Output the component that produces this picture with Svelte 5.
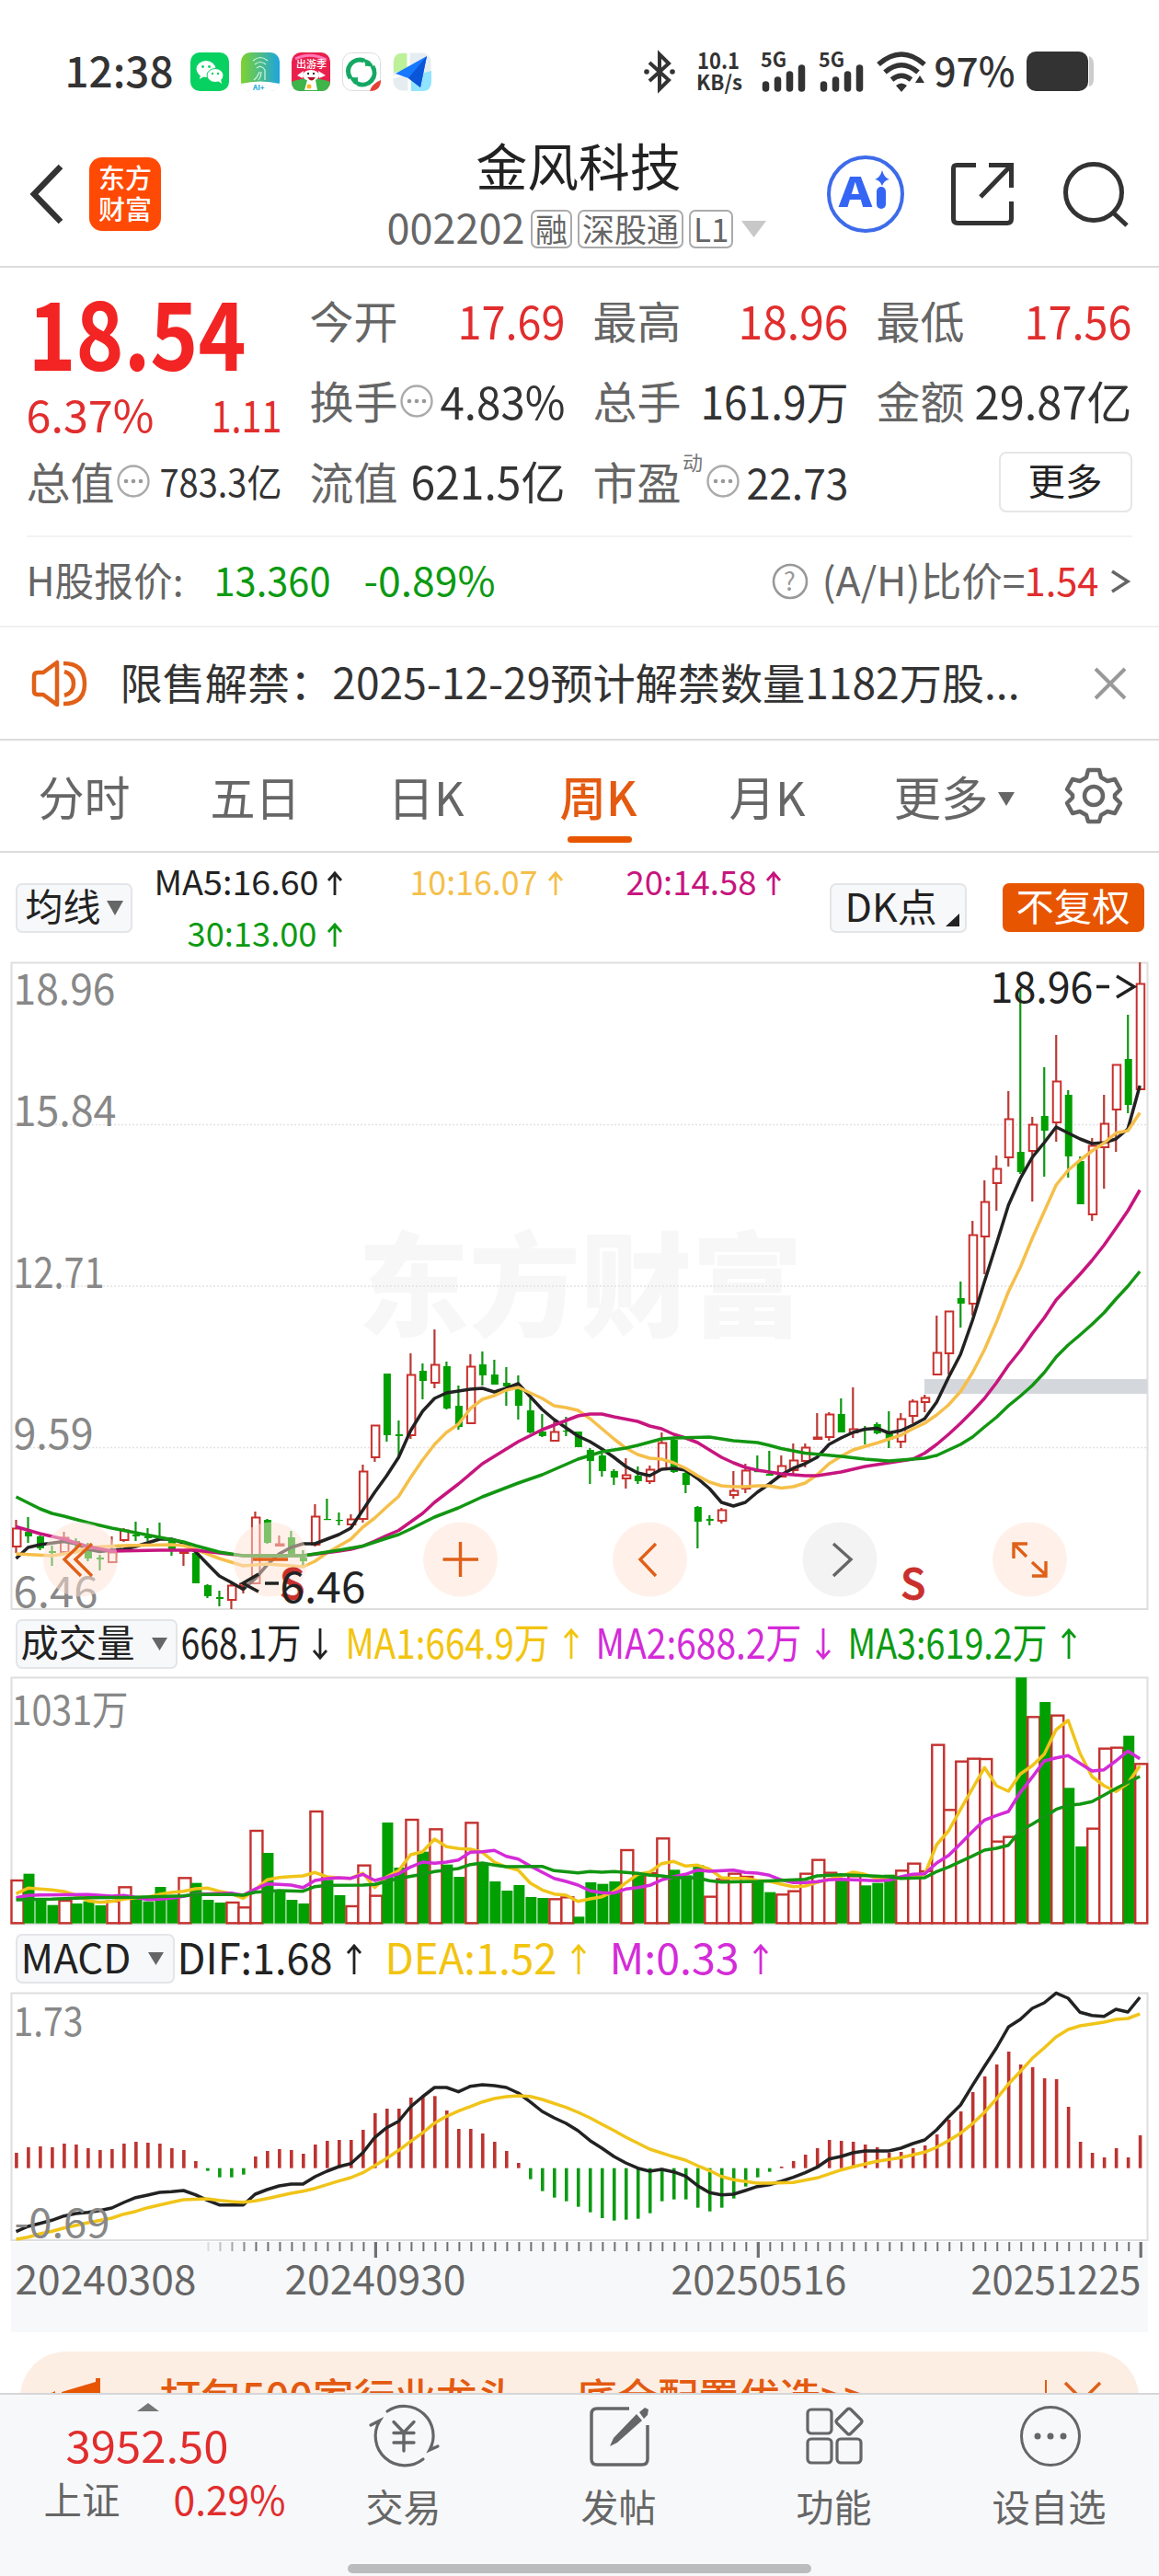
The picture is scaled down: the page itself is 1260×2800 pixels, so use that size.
<script>
  const STEP = 12.997;
  const X0 = 17.5;
  const cx = (i) => X0 + i * STEP;

  // Weekly candles: [direction, high, body top, body bottom, low] on the price plot
  const candles = [
    ['r',606,615,635,642],['g',603,619,624,631],['g',623,624,637,639],['g',634,640,642,656],['r',619,625,641,641],
    ['g',626,629,632,636],['g',631,639,648,651],['g',644,647,649,661],['r',624,641,652,652],['r',615,617,628,630],
    ['g',608,622,624,629],['g',615,624,626,629],['g',609,626,627,628],['g',628,628,638,645],['r',639,640,642,656],
    ['g',642,642,675,675],['g',676,677,689,691],['g',683,690,692,700],['r',675,677,693,703],['r',674,675,678,686],
    ['r',597,603,675,675],['g',605,606,631,632],['r',623,632,634,635],['g',618,625,643,644],['g',639,647,651,656],
    ['r',589,602,633,635],['g',583,605,606,606],['g',598,606,607,612],['r',600,605,611,611],['r',546,553,605,609],
    ['r',503,503,538,543],['g',447,447,514,521],['g',498,513,515,537],['r',425,448,514,518],['g',436,444,455,475],
    ['r',399,437,457,463],['g',434,439,485,486],['g',460,482,505,508],['r',426,439,501,501],['g',423,437,449,460],
    ['g',432,448,459,459],['g',440,457,461,482],['g',449,464,482,497],['g',474,487,511,512],['g',491,510,515,516],
    ['r',499,510,520,520],['g',494,509,510,515],['g',510,510,527,527],['g',528,530,542,567],['g',534,536,553,559],
    ['g',551,553,560,568],['r',539,557,561,572],['g',548,558,564,567],['r',547,551,564,567],['r',511,522,551,551],
    ['g',518,519,554,555],['g',549,555,568,577],['g',591,592,608,637],['g',601,605,607,612],['r',593,595,607,610],
    ['r',553,574,579,583],['r',545,552,572,577],['g',536,553,554,554],['g',531,556,558,558],['r',536,547,559,560],
    ['r',523,541,552,556],['r',523,527,542,549],['r',490,516,518,518],['r',489,491,516,520],['g',474,491,511,511],
    ['r',462,507,511,517],['g',504,507,509,524],['g',500,502,512,513],['g',488,512,519,528],['r',490,496,521,528],
    ['r',475,477,493,501],['r',470,473,478,489],['r',384,424,448,448],['r',379,379,425,448],['g',347,365,371,397],
    ['r',281,296,371,384],['r',237,260,298,339],['r',210,224,240,270],['r',140,170,212,222],['g',28,206,228,230],
    ['r',168,176,205,260],['g',114,167,183,233],['r',79,129,174,195],['g',139,144,211,234],['g',211,216,263,263],
    ['r',191,199,274,281],['r',144,175,201,246],['r',111,111,160,206],['g',57,105,155,164],['r',0,23,138,138]
  ];

  // Line series as "index:value" pairs
  const parse = (s) => s.split(' ').map((p) => p.split(':').map(Number));
  const line = (s, f = (v) => v) => parse(s).map(([i, v]) => `${cx(i).toFixed(1)},${f(v).toFixed(1)}`).join(' ');

  const ma5 = line('0:648 1:636 2:633 4:629.5 5:632 6:638 7:640.5 8:639 9:638 10:635 11:631 12:627 13:627 14:631 15:640.5 16:654 17:667 18:674 19:681.5 20:670 21:655 22:643 23:636 24:632 25:632 26:627 27:622 28:615 29:595.5 30:576 31:558 32:538 33:509 34:488 35:474 36:468 37:466 38:464 39:463 40:467 41:463 42:458 43:472 44:486 45:497 46:506 47:515 48:521 49:529 50:538 51:548 52:555 53:558 54:551 55:550 56:552 57:561 58:572 59:587 60:591 61:587 62:576 63:567 64:557 65:550 66:545 67:538 68:524 69:517 70:511 71:507.5 72:506.5 73:511.5 74:509 75:503 76:496 77:478 78:451 79:426 80:389 81:347 82:306 83:264 84:235 85:212 86:196 87:179 88:185.5 89:192 90:197 91:196 92:192 93:181 94:134');
  const ma10 = line('0:643 3:645 5:641 6:636 9:634 13:633 14:634 15:638 17:648 19:656 21:654 24:657 25:651 26:642 28:627 29:614 30:604 31:592 32:580.5 33:560 34:541 35:524 36:511 37:502 38:485 39:475 40:471 41:465 42:462 43:468 44:474 45:482 46:484 47:487 48:496 49:507 50:518 51:528 52:535 53:539 54:540 55:544 56:550 57:558 58:565 59:569 60:570 61:570 62:569 63:569 64:571.5 65:570 66:566 67:557 68:545 69:537 70:530 72:522.5 74:514 75:507 76:501 77:492 78:481 79:466.5 80:446 81:421 82:391 83:358 84:331.5 85:300 86:271 87:242 88:226 89:215 90:205 91:196.5 92:185.5 93:183 94:163.5');
  const ma20 = line('0:613.5 2:621 4:627 6:635 8:640 12:639 15:639 17:642 19:645 24:645 27:640 28:638 29:634.5 30:629 31:623 32:617.5 34:599 35:587 37:567 39:545 40:537 42:521 44:508 46:498 47:493 48:491 49:491 50:494 52:499 53:504 54:507 55:513 56:517 57:522 58:530 59:538 60:544 61:549 62:552 64:556 66:558 67:558 69:554 71:548 73:544 75:540 76:533.5 77:524 78:513 79:501 80:488 81:474 82:457 83:438 84:422 85:403.5 86:386.5 87:367 89:339 90:324 91:307.5 92:289 93:270 94:247.5');
  const ma30 = line('0:581 2:594 3:599 4:602 6:609 8:615 10:620 12:625 14:630 15:634 17:641 19:645 24:645 27:639 29:634.5 31:626 32:622 33:616 35:603 37:593 39:581 42:566 44:557 47:540 49:532 51:528 52:525 54:518 55:517 58:516 60:520 62:522 63:525 64:528.5 66:533.5 69:537 71:540 73:542 76:539 77:536 79:524 80:516 81:505 82:494.5 83:482 84:471.5 85:460 86:446 87:429 88:416 89:405 90:393.5 91:381 92:366 93:352 94:336');

  // Volume bars; minus marks a down week
  const vy = (v) => (v - 219) / 3;
  const volume = [882,-860,-945,-962,948,-957,-950,-963,950,904,-942,-950,-903,-942,874,-890,-945,-954,954,970,720,-792,-920,-945,-957,657,-880,-930,966,833,932,-693,-840,684,-788,715,-830,-870,694,-825,-885,-915,-897,-936,-939,943,937,-1000,-888,-893,-885,783,-862,858,745,-847,-865,-832,935,878,860,870,-885,-920,928,917,860,815,857,-882,868,-898,-890,-863,850,827,852,440,652,494,485,486,755,740,-220,349,-300,344,-580,-771,713,452,449,-410,502];
  const v1 = line('0:925 1:907 2:910 3:913 4:918 5:930 6:948 7:953 8:950 9:943 10:938 11:937 12:927 13:921 14:917 15:909 16:907 17:917 18:925 19:940 20:912 21:880 22:872 23:869 24:867 25:856 26:870 27:874 28:875 29:858 30:905 31:870 32:850 33:798 34:788 35:747 36:772 37:778 38:780 39:790 40:822 41:838 42:848 43:890 44:913 45:926 46:930 47:950 48:942 49:935 50:918 51:890 52:862 53:855 54:827 55:820 56:835 57:832 58:845 59:873 60:875 61:875 62:882 63:884 64:894 65:902 66:900 67:888 68:878 69:868 70:855 71:862 72:875 73:878 74:873 75:870 76:862 77:765 78:720 79:650 80:582 81:514 82:573 83:591 84:535 85:508 86:470 87:390 88:360 89:468 90:543 91:573 92:592 93:565 94:508', vy);
  const v2 = line('0:938 1:931 2:929 6:928 8:933 9:931 10:937 11:944 12:943 13:940 15:927 18:923 19:930 20:910 21:893 22:895 23:897 24:905 25:882 26:876 27:873 28:875 29:862 30:882 31:872 32:860 33:838 34:822 35:826 36:822 37:815 38:790 39:788 40:784 41:803 42:812 43:835 44:855 45:875 46:885 47:897 48:916 49:922 50:923 51:910 52:905 53:898 54:880 55:870 56:862 57:848 58:852 60:848 61:856 62:858 63:865 64:880 65:889 66:889 67:886 68:880 69:878 71:881 72:883 73:881 74:870 75:862 76:860 77:825 78:800 79:762 80:722 81:685 82:670 83:657 84:595 85:545 86:492 87:482 88:475 89:500 90:525 91:521 92:492 93:460 94:485', vy);
  const v3 = line('0:945 3:943 6:938 10:937 14:932 15:928 18:928 19:930 20:920 22:915 24:917 25:902 26:898 29:897 30:895 31:885 32:875 34:862 35:853 36:848 37:843 38:830 39:825 40:832 41:837 44:836 45:850 47:857 48:853 49:855 50:853 52:859 53:865 54:867 55:872 57:874 58:883 59:887 62:885 66:878 67:867 69:863 72:868 73:870 74:875 76:873 77:853 78:838 79:820 80:802 81:783 82:777 83:767 84:720 85:698 86:675 87:650 88:637 89:633 90:625 91:604 92:582 93:562 94:543', vy);

  const my = (v) => (v - 198) / 3;
  const ZERO = 770;
  const hist = [720,702,699,702,690,693,705,711,708,690,684,687,690,705,711,747,779,800,800,791,732,714,708,711,723,693,681,678,678,645,591,576,576,540,535,535,582,642,642,657,684,714,753,806,845,866,878,896,914,933,941,938,935,917,878,872,872,899,911,899,869,830,800,782,765,747,726,705,678,681,684,693,702,720,717,705,696,660,612,585,522,471,432,390,432,441,477,480,570,684,720,735,705,735,663];
  const dif = line('0:977 1:960 2:950 3:940 4:926 5:918 6:914 7:908 8:900 9:882 10:866 11:858 12:849 13:847 14:843 15:857 16:875 17:890 19:890 20:855 21:840 22:828 23:822 24:822 25:798 26:780 27:765 28:755 29:720 30:670 31:638 32:617 33:570 34:537 35:507 36:507 37:521 38:503 39:498 40:501 41:507 42:525 43:554 44:585 45:606 46:624 47:648 48:680 49:705 50:732 51:753 52:770 53:780 54:774 55:782 56:796 57:827 58:850 59:857 60:855 61:843 62:830 63:824 64:813 65:800 66:785 67:767 68:740 69:732 70:720 71:714 73:714 74:705 75:690 76:678 77:645 78:603 79:564 80:500 81:438 82:378 83:310 84:285 85:249 86:231 87:199 88:216 89:262 90:272 91:275 92:252 93:261 94:213', my);
  const dea = line('0:1002 1:995 2:984 3:976 4:965 6:948 8:933 9:920 10:911 11:899 13:881 14:873 16:870 17:875 18:879 19:881 20:877 21:869 23:852 24:845 25:836 26:824 27:812 28:801 29:785 30:762 31:738 32:712 33:683 34:655 35:623 36:601 37:584 39:554 40:543 41:537 42:534 43:536 44:546 46:572 47:588 48:606 49:627 50:647 51:669 53:708 55:733 56:744 57:762 58:778 59:797 60:808 62:819 63:819 65:817 67:802 69:776 70:766 71:757 72:748 74:736 76:718 77:702 78:680 79:656 80:625 81:588 82:544 83:496 84:455 85:412 86:378 87:342 88:318 89:306 91:294 92:285 93:282 94:267', my);

  const ticks = Array.from({ length: 79 }, (_, k) => k + 16);
  const grid = [['18.96', 45.5, 108], ['15.84', 178, 109], ['12.71', 353.5, 96], ['9.59', 529, 84], ['6.46', 701, 89]];
  const tabs = [['分时', 99], ['五日', 97], ['日K', 82], ['周K', 83], ['月K', 82], ['更多', 102]];
</script>

{#snippet fit(t, w, s, cls = '')}
  <svg class="fit {cls}" width={w} height={s}><text x="-1.500" y={s * 0.86} font-size={s} textLength={w + 1} lengthAdjust="spacingAndGlyphs">{t}</text></svg>
{/snippet}

{#snippet label(t, x, y, w, s, cls)}
  <text class={cls} x={x - 1.5} {y} font-size={s} textLength={w} lengthAdjust="spacingAndGlyphs">{t}</text>
{/snippet}

{#snippet arrow(x, top, h, up, cls)}
  <path class="arrow {cls}" d={up ? `M${x} ${top + h}V${top + 1}m-7 9l7-8l7 8` : `M${x} ${top}v${h - 1}m-7-8l7 8l7-8`} />
{/snippet}

{#snippet dots()}
  <svg class="dots" width="36" height="36"><circle cx="18" cy="18" r="16.5" fill="none" stroke="#aaa" stroke-width="2.4" /><circle cx="10" cy="18" r="2.3" /><circle cx="18" cy="18" r="2.3" /><circle cx="26" cy="18" r="2.3" /></svg>
{/snippet}

<div class="page">
  <div class="status">
    {@render fit('12:38', 117, 46, 'dark med')}
    <div class="apps">
      <svg width="42" height="42" viewBox="0 0 42 42"><rect width="42" height="42" rx="10" fill="#07d160" /><ellipse cx="17" cy="18" rx="10.5" ry="9" fill="#fff" /><path d="M11 24l-1 5 5-3z" fill="#fff" /><ellipse cx="27" cy="25" rx="9" ry="7.5" fill="#fff" stroke="#07d160" /><path d="M30 31l4 3-1-5z" fill="#fff" /><g fill="#07d160"><circle cx="13.500" cy="15.500" r="1.400" /><circle cx="20.500" cy="15.500" r="1.400" /><circle cx="24" cy="23" r="1.200" /><circle cx="30" cy="23" r="1.200" /></g></svg>
      <svg width="42" height="42" viewBox="0 0 42 42"><defs><linearGradient id="ag" x1="0" x2="1"><stop offset="0" stop-color="#7fd22e" /><stop offset="1" stop-color="#1ca5e0" /></linearGradient></defs><rect width="42" height="42" rx="10" fill="url(#ag)" /><g fill="none" stroke="#c9f7e2" stroke-width="1.200"><path d="M13 9q8-7 16 0M15 13q6-5 12 0M17 17q5-4 9 2v11M14 30q4-3 6-9M19 30q3-4 3-9" /></g><path d="M0 34Q21 29 42 34Q40 42 32 42H10Q2 42 0 34" fill="#fff" /><text x="13" y="41" font-size="8" font-weight="700" fill="#16a5d8">AI+</text></svg>
      <svg width="42" height="42" viewBox="0 0 42 42"><rect width="42" height="42" rx="10" fill="#e91f4c" /><path d="M4 7Q20-1 38 8" stroke="#ff78b8" stroke-width="3" fill="none" /><path d="M0 32q20-8 42 0q-1 10-10 10H10Q0 42 0 32" fill="#3eb449" /><text x="5" y="17" font-size="11" font-weight="500" fill="#fff">出游季</text><ellipse cx="21" cy="25" rx="9" ry="6" fill="#fff" /><path d="M13 20l-7 5 6 3zM29 20l8 5-7 3z" fill="#fff" /><path d="M17 30h9l2 11H14z" fill="#fff" /><circle cx="18" cy="23" r="1.200" /><circle cx="24" cy="23" r="1.200" /><path d="M17 27h9q-4 7-9 0" fill="#b31326" /><circle cx="19" cy="37" r="2.500" fill="#ffb424" /></svg>
      <svg width="42" height="42" viewBox="0 0 42 42"><rect x=".5" y=".5" width="41" height="41" rx="10" fill="#fff" stroke="#ddd" /><path d="M24 9A12.500 12.500 0 0 0 9 28M17 34A13 13 0 0 0 33 15" fill="none" stroke="#15a863" stroke-width="5" /><path d="M20 7Q32 6 34 17Q29 14 25 15Q26 10 20 7M22 36Q11 37 8 26Q13 28 17 27Q16 33 22 36" fill="#15a863" /><path d="M30 42q2-8 12-12q0 12-12 12" fill="#e54236" /></svg>
      <svg width="42" height="42" viewBox="0 0 42 42"><rect x=".5" y=".5" width="41" height="41" rx="10" fill="#e6edf0" /><path d="M1 22V10Q1 1 10 1H17V18z" fill="#bdf199" /><path d="M20 42V26L42 20V32Q42 42 32 42z" fill="#91e4ff" /><path d="M17 0V22L0 27M18 28V42" stroke="#fff" stroke-width="3" fill="none" /><path d="M37 4L3 23L17 28L30 38Z" fill="#1677ff" /><path d="M37 4L17 28L30 38Z" fill="#0b55d8" /></svg>
    </div>
    <div class="signals">
      <svg width="36" height="44" viewBox="0 0 36 44"><path d="M7 12L28 31L18 41V3L28 13L7 32" fill="none" stroke="#333" stroke-width="4" /><circle cx="4" cy="22" r="2.800" /><circle cx="32" cy="22" r="2.800" /></svg>
      <svg class="rate" width="52" height="46"><text x="1" y="20" font-size="25" textLength="46" lengthAdjust="spacingAndGlyphs">10.1</text><text x="0" y="43" font-size="22" textLength="50" lengthAdjust="spacingAndGlyphs">KB/s</text></svg>
      {#each [0, 1] as n}
        <svg class="cell c{n}" width="52" height="44"><text x="0" y="17" font-size="22" textLength="28" lengthAdjust="spacingAndGlyphs">5G</text><g stroke="#333" stroke-width="7.500" stroke-linecap="round"><path d="M5.500 36V40M18.500 31V40M31.500 25V40M44.500 18V40" /></g></svg>
      {/each}
      <svg class="wifi" width="54" height="44" viewBox="0 0 54 44"><g fill="none" stroke="#333" stroke-width="5.500"><path d="M2 14Q27-8 52 14M9 22.500Q27 7 45 22.500M16.500 30.500Q27 22 37.500 30.500" /></g><path d="M21 37q6-5 12 0l-6 7zM42 34l5-8 5 8z" /></svg>
      {@render fit('97%', 87, 43, 'dark med')}
      <svg class="bat" width="74" height="44"><rect width="67" height="43" rx="10" /><path d="M68 5Q73 7 73 14V30Q73 37 68 38" fill="#ccc" /></svg>
    </div>
  </div>

  <header>
    <svg class="back" width="40" height="68" viewBox="0 0 40 68"><path d="M35 4L6 34L35 64" fill="none" stroke="#333" stroke-width="6.500" /></svg>
    <div class="logo"><span>东方</span><span>财富</span></div>
    <div class="title">
      {@render fit('金风科技', 222, 55, 'ink')}
      <div class="sub">
        {@render fit('002202', 149, 45, 'grey')}
        <span class="tag">融</span><span class="tag">深股通</span><span class="tag">L1</span>
        <svg class="drop" width="27" height="18"><path d="M0 0H27L13.500 18Z" fill="#c8c8c8" /></svg>
      </div>
    </div>
    <svg class="ai" width="86" height="86"><circle cx="43" cy="43" r="40" fill="none" stroke="#3d6bea" stroke-width="4" /><text x="14" y="57" font-size="44" font-weight="900" fill="#3565f5" textLength="36" lengthAdjust="spacingAndGlyphs">A</text><path d="M60 40V54" stroke="#3565f5" stroke-width="10" stroke-linecap="round" /><path d="M61 17Q63 25 69 27Q63 28 61 34Q59 28 53 27Q59 25 61 17" fill="#3565f5" /></svg>
    <svg class="share" width="70" height="70" viewBox="0 0 70 70"><path d="M28 3.500H7Q3.500 3.500 3.500 7V62Q3.500 66.500 8 66.500H62Q66.500 66.500 66.500 62V43M42 3.500H66.500V28M66 4L33 38" fill="none" stroke="#333" stroke-width="5" /></svg>
    <svg class="search" width="72" height="72" viewBox="0 0 72 72"><circle cx="33" cy="34" r="30.500" fill="none" stroke="#333" stroke-width="5" /><path d="M54 56L69 70" stroke="#333" stroke-width="5" /></svg>
  </header>

  <section class="quote">
    <div class="col lead">
      <div class="price">{@render fit('18.54', 236, 103, 'hot bold')}</div>
      <div class="chg">{@render fit('6.37%', 138, 48, 'red')}{@render fit('1.11', 76, 48, 'red')}</div>
      <div class="cell-row">{@render fit('总值', 95, 48, 'grey')}{@render dots()}<i></i>{@render fit('783.3亿', 132, 41, 'dark')}</div>
    </div>
    <div class="col">
      <div class="cell-row">{@render fit('今开', 95, 48, 'grey')}<i></i>{@render fit('17.69', 116, 50, 'red')}</div>
      <div class="cell-row">{@render fit('换手', 95, 48, 'grey')}{@render dots()}<i></i>{@render fit('4.83%', 135, 49, 'dark')}</div>
      <div class="cell-row">{@render fit('流值', 95, 48, 'grey')}<i></i>{@render fit('621.5亿', 167, 49, 'dark')}</div>
    </div>
    <div class="col">
      <div class="cell-row">{@render fit('最高', 95, 48, 'grey')}<i></i>{@render fit('18.96', 119, 50, 'red')}</div>
      <div class="cell-row">{@render fit('总手', 95, 48, 'grey')}<i></i>{@render fit('161.9万', 160, 49, 'dark')}</div>
      <div class="cell-row">{@render fit('市盈', 95, 48, 'grey')}<sup>动</sup>{@render dots()}<i></i>{@render fit('22.73', 110, 46, 'dark')}</div>
    </div>
    <div class="col">
      <div class="cell-row">{@render fit('最低', 95, 48, 'grey')}<i></i>{@render fit('17.56', 116, 50, 'red')}</div>
      <div class="cell-row">{@render fit('金额', 95, 48, 'grey')}<i></i>{@render fit('29.87亿', 170, 49, 'dark')}</div>
      <div class="cell-row"><i></i><div class="more">{@render fit('更多', 80, 40, 'ink')}</div></div>
    </div>
  </section>

  <section class="hshare">
    {@render fit('H股报价:', 170, 43, 'grey')}
    <span class="h1">{@render fit('13.360', 126, 44, 'green')}</span>
    <span class="h2">{@render fit('-0.89%', 142, 44, 'green')}</span>
    <i></i>
    <svg class="help" width="40" height="40"><circle cx="20" cy="20" r="18" fill="none" stroke="#999" stroke-width="2.600" /><text x="13" y="30" font-size="27" fill="#999">?</text></svg>
    {@render fit('(A/H)比价=', 220, 43, 'grey')}{@render fit('1.54', 80, 44, 'red')}
    <svg class="gt" width="21" height="28"><path d="M2 3L19 14L2 25" fill="none" stroke="#666" stroke-width="3.500" /></svg>
  </section>

  <section class="notice">
    <svg width="62" height="54" viewBox="0 0 62 54"><g fill="none" stroke="#e06018" stroke-width="4.500" stroke-linejoin="round"><path d="M3 19Q3 15 7 15H13L28 4V50L13 39H7Q3 39 3 35ZM36 14Q46 17 46 27Q46 37 36 40M35 5Q58 5 58 27Q58 49 35 49" /></g></svg>
    {@render fit('限售解禁：2025-12-29预计解禁数量1182万股...', 977, 46, 'dark')}
    <svg class="close" width="36" height="36"><path d="M2 2L34 34M34 2L2 34" stroke="#999" stroke-width="4" /></svg>
  </section>

  <nav class="tabs">
    {#each tabs as [t, w], k}
      <div class="tab" class:on={k === 3} class:wide={k === 5}>{@render fit(t, w, 51, k === 3 ? 'orange med' : 'grey')}{#if k === 5}<svg width="18" height="15"><path d="M0 0H18L9 15Z" fill="#666" /></svg>{/if}</div>
    {/each}
    <svg class="gear" width="62" height="62" viewBox="0 0 62 62"><g fill="none" stroke="#666" stroke-width="4.500" stroke-linejoin="round"><path d="M25 3H37L39 11L46 15L54 13L60 24L54 30V33L60 39L54 50L46 48L39 52L37 59H25L23 52L16 48L8 50L2 39L8 33V30L2 24L8 13L16 15L23 11Z" /><circle cx="31" cy="31" r="10" /></g></svg>
  </nav>

  <section class="marow">
    <div class="chip avg">{@render fit('均线', 81, 41, 'ink')}<svg width="18" height="16"><path d="M0 0H18L9 16Z" fill="#666" /></svg></div>
    <svg class="legend" width="700" height="118">
      {@render label('MA5:16.60', 0, 45, 179, 37, 'ink')}{@render arrow(195, 19, 26, true, 'ink')}
      {@render label('10:16.07', 278, 45, 139, 37, 'amber')}{@render arrow(435, 19, 26, true, 'amber')}
      {@render label('20:14.58', 513, 45, 142, 37, 'pink')}{@render arrow(672, 19, 26, true, 'pink')}
      {@render label('30:13.00', 36, 100.500, 141, 37, 'green')}{@render arrow(195, 75, 26, true, 'green')}
    </svg>
    <div class="chip dk">{@render fit('DK点', 99, 42, 'ink')}<svg width="15" height="14"><path d="M15 0V14H0Z" fill="#222" /></svg></div>
    <div class="adj">{@render fit('不复权', 123, 41, 'white')}</div>
  </section>

  <svg class="plot" width="1260" height="704">
    <rect class="frame" x="12.500" y=".5" width="1235" height="702.500" />
    <text class="mark" x="389" y="397" font-size="123" textLength="484" lengthAdjust="spacingAndGlyphs">东方财富</text>
    {#each [176.5, 352, 527.5] as y}<path class="gridline" d="M12 {y}H1248" />{/each}
    <rect x="1005" y="453" width="242" height="16" fill="#d4d7dc" />
    {#each candles as [d, h, t, b, l], i}
      {#if d === 'g'}
        <path d="M{cx(i)} {h}V{Math.max(l, b)}" stroke="#0f9612" stroke-width="2.200" />
        <rect x={cx(i) - 3.5} y={t} width="8" height={Math.max(b - t, 1.2)} fill="#00a000" />
      {:else}
        <path d="M{cx(i)} {h}V{t}M{cx(i)} {b}V{l}" stroke="#b83a35" stroke-width="2.200" />
        <rect x={cx(i) - 3.5} y={t + 0.5} width="8.500" height={Math.max(b - t - 0.5, 1)} fill="none" stroke="#c9302c" stroke-width="2" />
      {/if}
    {/each}
    <polyline points={ma5} stroke="#222" /><polyline points={ma10} stroke="#f5bf4a" /><polyline points={ma20} stroke="#c7157e" /><polyline points={ma30} stroke="#129612" />
    {#each grid as [t, y, w]}{@render label(t, 16, y, w + 3, 46.5, 'axis')}{/each}
    <g class="tools">
      {#each [87.5, 294, 500.5, 706.5, 913, 1119.5] as x, k}<circle cx={x} cy="649" r="40.500" fill={k === 4 ? '#e8e8e8' : '#ffe4d6'} fill-opacity=".5" />{/each}
      <path d="M88 632L70 649L88 667M100 632L82 649L100 667M275 649H313M481.500 649H520M500.500 630V668M713 632L696 649L713 667" />
      <path d="M906 632L925 649L906 667" stroke="#666" />
      <path d="M1102 648V632H1117M1102 632L1116 646M1122 652L1137 666M1122 667H1137V651" />
    </g>
    <text class="sell" x="304" y="692">S</text><text class="sell" x="979" y="692">S</text>
    <path d="M281 665L264 675L281 684M288 675H303" fill="none" stroke="#222" stroke-width="3.400" />
    {@render label('6.46', 306, 695.500, 93, 46.500, 'ink')}
    {@render label('18.96', 1078, 44, 112, 46.500, 'ink')}
    <path d="M1192 26.500H1206M1214 15L1233 26.500L1214 38" fill="none" stroke="#222" stroke-width="3.400" />
  </svg>

  <div class="ind">
    <div class="chip vol">{@render fit('成交量', 123, 41, 'ink')}<svg width="17" height="14"><path d="M0 0H17L8.500 14Z" fill="#666" /></svg></div>
    <svg class="legend" width="1060" height="73">
      {@render label('668.1万', 5, 53, 131, 45, 'ink')}{@render arrow(155, 20, 33, false, 'ink')}
      {@render label('MA1:664.9万', 184, 53, 222, 45, 'gold')}{@render arrow(428, 20, 33, true, 'gold')}
      {@render label('MA2:688.2万', 456, 53, 224, 45, 'violet')}{@render arrow(702, 20, 33, false, 'violet')}
      {@render label('MA3:619.2万', 730, 53, 217, 45, 'green')}{@render arrow(969, 20, 33, true, 'green')}
    </svg>
  </div>
  <svg class="plot" width="1260" height="269">
    <rect class="frame" x="12.500" y=".5" width="1235" height="268" />
    {#each volume as v, i}
      {#if v < 0}<rect x={cx(i) - 5} y={vy(-v)} width="12" height={vy(1022) - vy(-v)} fill="#00a000" />
      {:else}<rect x={cx(i) - 5} y={vy(v)} width="13" height={vy(1021) - vy(v)} fill="#fff" stroke="#c4312e" stroke-width="2.400" />{/if}
    {/each}
    <polyline points={v1} stroke="#f0c419" /><polyline points={v2} stroke="#d42bd8" /><polyline points={v3} stroke="#129612" />
    {@render label('1031万', 14, 52, 127, 44, 'axis')}
  </svg>

  <div class="ind macd">
    <div class="chip vol mc">{@render fit('MACD', 119, 43, 'ink')}<svg width="17" height="14"><path d="M0 0H17L8.500 14Z" fill="#666" /></svg></div>
    <svg class="legend" width="1060" height="74">
      {@render label('DIF:1.68', 4, 54, 169, 46, 'ink')}{@render arrow(195, 21, 33, true, 'ink')}
      {@render label('DEA:1.52', 230, 54, 187, 46, 'gold')}{@render arrow(439, 21, 33, true, 'gold')}
      {@render label('M:0.33', 474, 54, 141, 46, 'violet')}{@render arrow(637, 21, 33, true, 'violet')}
    </svg>
  </div>
  <svg class="plot" width="1260" height="271">
    <rect class="frame" x="12.500" y=".5" width="1235" height="268.500" />
    {#each hist as v, i}<path d="M{cx(i) + 0.4} {my(ZERO)}V{my(v)}" stroke={v < ZERO ? '#bd3330' : '#0c9a12'} stroke-width="3.600" />{/each}
    <polyline points={dif} stroke="#222" /><polyline points={dea} stroke="#f0c419" />
    {@render label('1.73', 16, 47, 76, 44, 'axis')}{@render label('-0.69', 17, 266, 104, 44, 'axis')}
  </svg>
  <svg class="plot" width="1260" height="98">
    <rect x="12" width="1236" height="98" fill="#f7f8fa" />
    {#each ticks as i}<path d="M{cx(i) + 1} 0V{(i - 30) % 32 === 0 ? 17 : 10}" stroke="#707070" stroke-width={(i - 30) % 32 === 0 ? 3.2 : 2} opacity={i < 20 ? (i - 15) * 0.2 : 1} />{/each}
    {@render label('20240308', 18, 57, 197, 44, 'date')}{@render label('20240930', 311, 57, 197, 44, 'date')}{@render label('20250516', 731, 57, 191, 44, 'date')}{@render label('20251225', 1057, 57, 185, 44, 'date')}
  </svg>

  <div class="promo">
    <div class="pill">
      <svg width="60" height="60"><path d="M0 16L4 14V30H0ZM11 15L48 4V0H53V56H48L11 42Z" fill="#e85500" /></svg>
      {@render fit('打包500家行业龙头，', 434, 42, 'orange med')}
      <span class="rest">{@render fit('底仓配置优选>>', 315, 42, 'orange med')}</span>
      <b></b>
      <svg class="px" width="40" height="40"><path d="M1 1L39 39M39 1L1 39" stroke="#e06018" stroke-width="3.500" /></svg>
    </div>
  </div>

  <footer>
    <div class="index">
      <svg width="24" height="9"><path d="M0 9L12 0L24 9Z" fill="#777" /></svg>
      {@render fit('3952.50', 176, 47, 'red')}
      <div>{@render fit('上证', 82, 41, 'grey')}{@render fit('0.29%', 121, 44, 'red')}</div>
    </div>
    <div class="act">
      <svg width="78" height="70" viewBox="0 0 78 70"><g fill="none" stroke="#666" stroke-width="3.200" stroke-linecap="round"><path d="M21 8A32 32 0 0 1 67 50L76 46M3 23L13 18A32 32 0 0 0 60 60" /><path d="M28 19.500L39 31L50 19.500M39 31V51M28 31.500H50M28 42H50" stroke-width="3.400" /></g></svg>
      {@render fit('交易', 81, 41, 'grey')}
    </div>
    <div class="act">
      <svg width="78" height="70" viewBox="0 0 78 70"><path d="M50 5H15Q9 5 9 11V60Q9 66 15 66H64Q70 66 70 60V23" fill="none" stroke="#666" stroke-width="3.500" /><path d="M58 11L64 18L37 42L29 46L33 37ZM61 9L67 4L71 6L70 12L66 16Z" fill="#666" /></svg>
      {@render fit('发帖', 81, 41, 'grey')}
    </div>
    <div class="act">
      <svg width="78" height="70" viewBox="0 0 78 70"><g fill="none" stroke="#666" stroke-width="3.200"><rect x="10" y="6" width="26" height="26" rx="4" /><rect x="10" y="38" width="26" height="26" rx="4" /><rect x="42" y="38" width="26" height="26" rx="4" /><path d="M53 6Q55 4 57 6L68 17Q70 19 68 21L57 32Q55 34 53 32L42 21Q40 19 42 17Z" /></g></svg>
      {@render fit('功能', 81, 41, 'grey')}
    </div>
    <div class="act">
      <svg width="78" height="70" viewBox="0 0 78 70"><circle cx="39" cy="35" r="31.500" fill="none" stroke="#666" stroke-width="3" /><g fill="#666"><circle cx="25" cy="35" r="3.500" /><circle cx="39" cy="35" r="3.500" /><circle cx="53" cy="35" r="3.500" /></g></svg>
      {@render fit('设自选', 123, 41, 'grey')}
    </div>
    <div class="home"></div>
  </footer>
</div>

<style>
  :global(body) { margin: 0; background: #fff; }
  .page { width: 1260px; height: 2800px; overflow: hidden; background: #fff; font-family: "Noto Sans CJK SC", "Noto Sans", sans-serif; display: flex; flex-direction: column; }
  .page > * { flex: none; box-sizing: border-box; }
  svg { display: block; flex: none; overflow: visible; }
  i { flex: 1; }
  .grey { fill: #666; } .dark { fill: #333; } .ink { fill: #222; } .red { fill: #e12d2d; } .hot { fill: #f32424; }
  .green { fill: #0c9a12; } .orange { fill: #e35a10; } .white { fill: #fff; } .amber { fill: #f5bf4a; } .pink { fill: #c7157e; }
  .gold { fill: #f2c40f; } .violet { fill: #d42bd8; } .axis { fill: #888; } .date { fill: #666; }
  .med { font-weight: 500; } .bold { font-weight: 700; }
  .arrow { fill: none; stroke-width: 2.8; }
  .arrow.ink { stroke: #222; fill: none; } .arrow.amber { stroke: #f5bf4a; fill: none; } .arrow.pink { stroke: #c7157e; fill: none; }
  .arrow.green { stroke: #0c9a12; fill: none; } .arrow.gold { stroke: #f2c40f; fill: none; } .arrow.violet { stroke: #d42bd8; fill: none; }
  polyline { fill: none; stroke-width: 3.5; stroke-linejoin: round; }

  .status { height: 132px; padding: 24px 70px 0 72px; display: flex; align-items: center; fill: #333; }
  .apps { display: flex; gap: 13px; margin-left: 18px; }
  .signals { margin-left: auto; display: flex; align-items: center; }
  .rate { margin-left: 22px; font-weight: 700; }
  .cell { margin-left: 18px; font-weight: 700; }
  .c1 { margin-left: 11px; }
  .wifi { margin: 0 10px 0 11px; }
  .bat { margin-left: 12px; }

  header { height: 159px; display: flex; align-items: center; border-bottom: 2px solid #dcdcdc; padding-left: 31px; }
  .logo { width: 78px; height: 80px; margin-left: 26px; border-radius: 14px; background: #ff4a05; color: #fff; display: flex; flex-direction: column; align-items: center; justify-content: center; font-size: 29px; line-height: 34px; font-weight: 500; padding-bottom: 4px; box-sizing: border-box; }
  .title { margin-left: 247px; width: 414px; display: flex; flex-direction: column; gap: 18px; padding-top: 3px; }
  .title > :global(svg) { margin-left: 97px; }
  .sub { display: flex; align-items: center; height: 42px; }
  .tag { box-sizing: border-box; height: 42px; border: 2px solid #aaa; border-radius: 7px; font-size: 35px; line-height: 35px; color: #666; padding: 0 3px; margin-left: 6px; white-space: nowrap; }
  .drop { margin-left: 9px; }
  .ai { margin-left: 62px; } .share { margin-left: 49px; } .search { margin-left: 53px; }

  .quote { height: 293px; margin: 0 29px; padding: 16px 0 0 1px; display: grid; grid-template-columns: repeat(4, 277px); column-gap: 31px; border-bottom: 2px solid #f3f3f3; }
  .col { display: flex; flex-direction: column; }
  .cell-row { height: 87.5px; display: flex; align-items: center; }
  .price { height: 116px; display: flex; align-items: center; padding-left: 2px; }
  .chg { height: 59px; display: flex; align-items: center; justify-content: space-between; }
  .dots { fill: #999; margin: -5px 0 0 2px; }
  sup { font-size: 22px; color: #777; line-height: 22px; align-self: flex-start; margin: 8px 2px 0 1px; width: 22px; }
  .more { width: 145px; height: 66px; border: 2px solid #e6e6e6; border-radius: 8px; box-sizing: border-box; display: flex; align-items: center; justify-content: center; margin: -3px 0 0; }

  .hshare { height: 98px; display: flex; align-items: center; padding: 0 32px 0 30px; border-bottom: 2px solid #f0f0f0; }
  .h1 { margin-left: 34px; } .h2 { margin-left: 37px; }
  .help { margin-right: 16px; } .gt { margin-left: 12px; }
  .notice { height: 123px; display: flex; align-items: center; padding: 0 35px 0 34px; border-bottom: 2px solid #dcdcdc; }
  .notice > :global(.fit) { margin-left: 36px; }
  .close { margin-left: auto; }

  .tabs { height: 122px; display: flex; align-items: center; border-bottom: 2px solid #dcdcdc; }
  .tab { width: 185.5px; height: 100%; display: flex; align-items: center; justify-content: center; gap: 10px; padding-top: 6px; box-sizing: border-box; position: relative; }
  .tab.on::after { content: ''; position: absolute; bottom: 9px; left: 60px; width: 70px; height: 7px; border-radius: 3.5px; background: #e85500; }
  .tab.on { padding-left: 4px; }
  .tab.wide { width: 220px; }
  .gear { margin: 0 0 0 10px; }

  .marow { height: 119px; display: flex; align-items: center; padding-left: 17px; }
  .chip { box-sizing: border-box; height: 54px; border: 2px solid #e4e5e8; border-radius: 7px; background: #f7f8fa; display: flex; align-items: center; }
  .avg { width: 127px; padding-left: 10px; gap: 6px; }
  .marow .legend { margin-left: 25px; }
  .dk { width: 149px; margin-left: 33px; padding-left: 16px; gap: 9px; }
  .dk > svg:last-child { margin-top: 26px; }
  .adj { margin-left: 39px; width: 154px; height: 53px; border-radius: 7px; background: #e85500; display: flex; align-items: center; justify-content: center; }

  .frame { fill: none; stroke: #dedede; stroke-width: 2; }
  .gridline { stroke: #e2e2e2; stroke-width: 1.6; stroke-dasharray: 2 2; }
  .mark { font-weight: 900; fill: #f7f7f7; }
  .tools path { fill: none; stroke: #e06018; stroke-width: 3.4; }
  .tools path:nth-of-type(2) { stroke: #666; }
  .sell { font-size: 45px; font-weight: 500; fill: #c9302c; stroke: #c9302c; stroke-width: 0.8; }

  .ind { height: 73px; display: flex; align-items: center; padding-left: 17px; }
  .macd { height: 74px; }
  .vol { width: 176px; padding-left: 5px; gap: 18px; }
  .mc { width: 173px; }

  .promo { height: 66px; padding: 21px 22px 0; overflow: hidden; }
  .pill { height: 100px; border-radius: 50px; background: #fdeee4; display: flex; align-items: flex-start; padding: 29px 0 0 34px; box-sizing: border-box; }
  .pill > :global(.fit) { margin-left: 59px; }
  .rest { margin-left: 19px; }
  .pill b { width: 2px; height: 40px; background: #e35a10; margin: 2px 0 0 193px; }
  .px { margin: 4px 0 0 19px; }

  footer { height: 199px; background: #f7f8fa; border-top: 2px solid #d5d6d8; display: flex; position: relative; }
  .index { width: 322px; display: flex; flex-direction: column; align-items: center; padding-top: 9px; }
  .index > :global(.fit) { margin-top: 16px; }
  .index > div { display: flex; align-items: center; gap: 59px; width: 262px; margin-top: 12px; margin-left: 38px; }
  .act { width: 234.2px; display: flex; flex-direction: column; align-items: center; gap: 23px; padding-top: 10px; flex: none; }
  .home { position: absolute; left: 378px; bottom: 3px; width: 504px; height: 10px; border-radius: 5px; background: #bbbcbe; }
</style>
